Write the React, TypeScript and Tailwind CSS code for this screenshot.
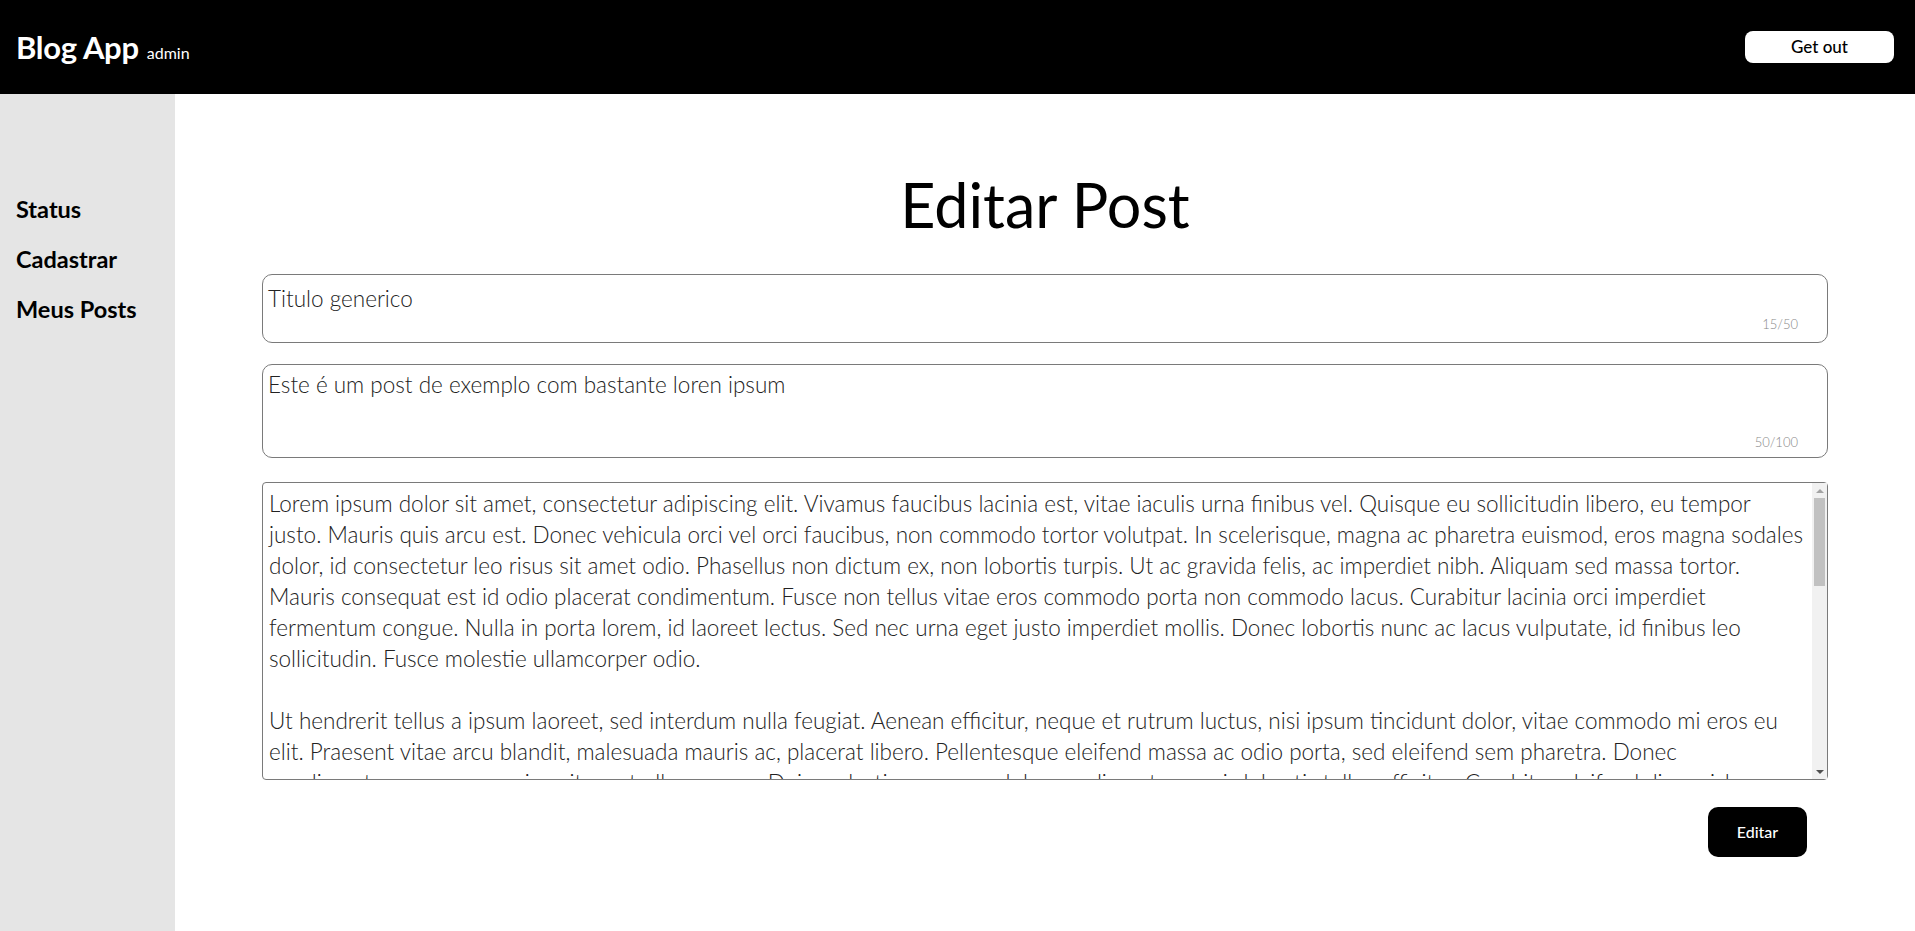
import React from "react";

const LOREM =
  "Lorem ipsum dolor sit amet, consectetur adipiscing elit. Vivamus faucibus lacinia est, vitae iaculis urna finibus vel. Quisque eu sollicitudin libero, eu tempor justo. Mauris quis arcu est. Donec vehicula orci vel orci faucibus, non commodo tortor volutpat. In scelerisque, magna ac pharetra euismod, eros magna sodales dolor, id consectetur leo risus sit amet odio. Phasellus non dictum ex, non lobortis turpis. Ut ac gravida felis, ac imperdiet nibh. Aliquam sed massa tortor. Mauris consequat est id odio placerat condimentum. Fusce non tellus vitae eros commodo porta non commodo lacus. Curabitur lacinia orci imperdiet fermentum congue. Nulla in porta lorem, id laoreet lectus. Sed nec urna eget justo imperdiet mollis. Donec lobortis nunc ac lacus vulputate, id finibus leo sollicitudin. Fusce molestie ullamcorper odio.\n\nUt hendrerit tellus a ipsum laoreet, sed interdum nulla feugiat. Aenean efficitur, neque et rutrum luctus, nisi ipsum tincidunt dolor, vitae commodo mi eros eu elit. Praesent vitae arcu blandit, malesuada mauris ac, placerat libero. Pellentesque eleifend massa ac odio porta, sed eleifend sem pharetra. Donec condimentum posuere sapien sit amet ullamcorper. Duis molestie augue ac dolor condimentum, quis lobortis tellus efficitur. Curabitur eleifend diam nisl, ac tincidunt lorem porttitor vel. Nam vel lectus at sapien rhoncus sagittis. Integer eget mauris vel magna ultrices dapibus. Vestibulum ante ipsum primis in faucibus orci luctus et ultrices posuere cubilia curae; Sed pulvinar, nibh vel sodales ullamcorper, est tortor porta nisl, vitae gravida mi ligula non velit.\n\nNullam at sem a lorem tincidunt consequat. Maecenas varius, ligula at commodo tempor, nisi nulla dignissim risus, in bibendum tortor nisl vel ex. Aliquam erat volutpat. Morbi vitae lectus ut justo pellentesque hendrerit.";

export default function App() {
  return (
    <div className="min-h-screen flex flex-col bg-white font-['Lato',sans-serif] text-black">
      <header className="h-[94px] bg-black flex items-center justify-between pl-4 pr-[21px] shrink-0">
        <div className="flex items-baseline gap-[8px]">
          <span className="text-white font-bold text-[31px] leading-none tracking-[-0.3px]">Blog App</span>
          <span className="text-white text-[16px] leading-none">admin</span>
        </div>
        <button className="w-[149px] h-[32px] bg-white rounded-[8px] text-[17px] font-medium text-black">
          Get out
        </button>
      </header>
      <div className="flex flex-1">
        <aside className="w-[175px] bg-[#e5e5e5] shrink-0 pt-[100px] pl-4">
          <nav className="flex flex-col gap-[20px]">
            <a className="text-[23.5px] font-bold leading-[30px]">Status</a>
            <a className="text-[23.5px] font-bold leading-[30px]">Cadastrar</a>
            <a className="text-[23.5px] font-bold leading-[30px]">Meus Posts</a>
          </nav>
        </aside>
        <main className="flex-1 flex flex-col items-center pt-[69px]">
          <h1 className="text-[61px] font-normal leading-[84px]">Editar Post</h1>
          <div className="w-[90%] mt-[27px] flex flex-col">
            <div className="relative h-[69px] border border-[#7a7a7a] rounded-[10px]">
              <div className="pl-[5px] pt-[10px] text-[22.5px] font-light text-[#222] leading-[28px]">Titulo generico</div>
              <span className="absolute right-[29px] bottom-[8px] text-[13px] text-[#888] font-light">15/50</span>
            </div>
            <div className="relative h-[94px] mt-[21px] border border-[#7a7a7a] rounded-[10px]">
              <div className="pl-[5px] pt-[6px] text-[22.5px] font-light text-[#222] leading-[28px]">
                Este é um post de exemplo com bastante loren ipsum
              </div>
              <span className="absolute right-[29px] bottom-[5px] text-[13px] text-[#888] font-light">50/100</span>
            </div>
            <div className="relative mt-[24px] h-[298px]">
              <textarea
                readOnly
                defaultValue={LOREM}
                className="block h-full w-full resize-none border border-[#7a7a7a] rounded-[4px] pl-[6px] pr-[20px] pt-[5px] text-[22.5px] font-light text-[#222] leading-[31px] overflow-hidden outline-none font-['Lato',sans-serif]"
              />
              <div className="pointer-events-none absolute top-[1px] bottom-[1px] right-[1px] w-[15px] bg-[#f1f1f1] flex flex-col">
                <div className="h-[15px] flex items-center justify-center">
                  <span className="w-0 h-0 border-x-[4px] border-x-transparent border-b-[4px] border-b-[#a3a3a3]" />
                </div>
                <div className="flex-1 px-[2px]">
                  <div className="h-[88px] bg-[#c1c1c1]" />
                </div>
                <div className="h-[15px] flex items-center justify-center">
                  <span className="w-0 h-0 border-x-[4px] border-x-transparent border-t-[4px] border-t-[#505050]" />
                </div>
              </div>
            </div>
            <div className="flex justify-end mt-[27px] pr-[21px]">
              <button className="w-[99px] h-[50px] bg-black rounded-[10px] text-white text-[16px] font-medium">
                Editar
              </button>
            </div>
          </div>
        </main>
      </div>
    </div>
  );
}
